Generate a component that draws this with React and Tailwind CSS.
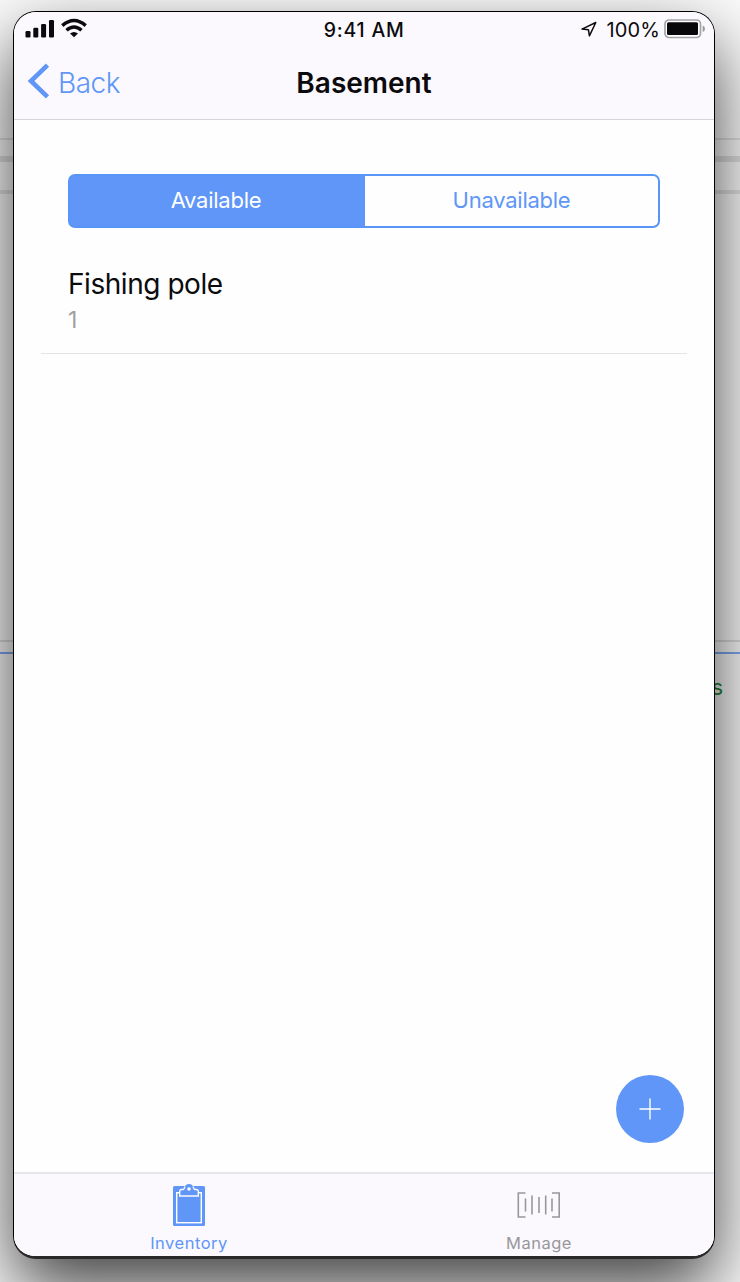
import React from 'react';

function DesktopBackdrop() {
  return (
    <div className="flex h-[1282px] w-[740px] flex-col bg-[#fbfbfb]">
      <div className="mt-[138px] h-[2px] bg-[#e2e2e2]" />
      <div className="mt-4 h-[6px] bg-[#e0e0e0]" />
      <div className="mt-[28px] h-[4px] bg-[#e2e2e2]" />
      <div className="mt-[446px] h-[2px] bg-[#dcdcdc]" />
      <div className="mt-[10px] h-[2px] bg-[#7fa9f5]" />
      <div className="mt-[20px] pr-[17px] text-right text-[22px] leading-[26px] text-[#2b8a3c]">items</div>
    </div>
  );
}

function StatusBar() {
  return (
    <div className="flex h-[35px] items-center justify-between pl-[11px] pr-[8px]">
      <svg className="-mt-px block" width="64" height="22" viewBox="0 0 64 22" fill="#0b0b0d">
        <rect x="0.5" y="13" width="5" height="6.5" rx="1.2" />
        <rect x="8.3" y="9.7" width="5" height="9.8" rx="1.2" />
        <rect x="16.1" y="6" width="5" height="13.5" rx="1.2" />
        <rect x="24" y="2" width="5" height="17.5" rx="1.2" />
        <g fill="none" stroke="#0b0b0d" strokeWidth="3.5">
          <path d="M37.300 7.600Q49 -2.500 60.700 7.600" />
          <path d="M41.500 12.300Q49 5.800 56.500 12.300" />
        </g>
        <path d="M45 15.600Q49 12.200 53 15.600L49 19.300Z" />
      </svg>
      <div className="ml-[59px] text-[19.5px] font-medium leading-6 tracking-[0.8px]">9:41 AM</div>
      <div className="flex items-center">
        <svg className="mr-[8px] block" width="18" height="17" viewBox="0 0 18 17" fill="none" stroke="#0b0b0d" strokeWidth="1.5" strokeLinejoin="round">
          <path d="M15.800 1.500L9.400 14.800L8.400 8.700L2 8.100Z" />
        </svg>
        <span className="text-[20px] leading-6 tracking-[0.15px]">100%</span>
        <svg className="-mt-px ml-[4px] block" width="42" height="20" viewBox="0 0 42 20">
          <rect x="1" y="1" width="35.500" height="17.500" rx="4" fill="#fff" stroke="#a4a3a8" strokeWidth="1.700" />
          <rect x="3" y="3.300" width="31" height="12.700" rx="1.500" fill="#08080a" />
          <path d="M38.700 6.500Q41 7.300 41 9.800T38.700 13Z" fill="#98979c" />
        </svg>
      </div>
    </div>
  );
}

function NavBar() {
  return (
    <div className="grid h-[71px] grid-cols-3 items-center">
      <div className="flex items-center pl-[13px] text-[#6096f8]">
        <svg className="-mt-[4px] block" width="23" height="36" viewBox="0 0 23 36" fill="none" stroke="currentColor" strokeWidth="4.600">
          <path d="M20.500 2.200L4 18L20.500 33.800" />
        </svg>
        <span className="ml-[8px] text-[28px] font-light leading-8 tracking-[-0.5px]">Back</span>
      </div>
      <h1 className="text-center text-[28px] font-semibold leading-8">Basement</h1>
    </div>
  );
}

function ClipboardIcon() {
  return (
    <svg className="block" width="34" height="42" viewBox="0 0 34 42">
      <rect x="1" y="2" width="32" height="40" rx="1.500" fill="#6096f8" />
      <rect x="4.700" y="8.700" width="24.600" height="30" fill="none" stroke="#fff" strokeWidth="1.400" />
      <path d="M7.700 12V7.500Q7.700 5.500 9.700 5.500H11.300C12.500 5.500 12.300 0.700 17 0.700S21.500 5.500 22.700 5.500H24.300Q26.300 5.500 26.300 7.500V12Z" fill="#6096f8" stroke="#faf9fd" strokeWidth="1.400" />
      <path d="M12.800 3.200Q13.800 0 17 0T21.200 3.200Z" fill="#6096f8" />
      <circle cx="17" cy="5" r="1.800" fill="#fff" />
    </svg>
  );
}

function BarcodeIcon() {
  return (
    <svg className="block" width="44" height="28" viewBox="0 0 44 28" fill="none" stroke="#98979b" strokeWidth="1.600">
      <path d="M8.500 2H1.300V26H8.500M35 2H42.200V26H35M8.500 7.500V20.500M15 4.500V23.500M22 6V22M28.700 4.500V23.500M35 7.500V20.500" />
    </svg>
  );
}

export default function App() {
  return (
    <div className="relative h-[1282px] w-[740px] overflow-hidden font-['Inter',sans-serif] text-[#0b0b0d]">
      <DesktopBackdrop />
      <main className="absolute left-[13px] top-[11px] flex h-[1248px] w-[702px] flex-col overflow-hidden rounded-[23px] border border-b-[3px] border-black border-b-[#29292b] bg-[#fefefe] shadow-[0_30px_70px_rgba(0,0,0,0.74)]">
        <header className="h-[108px] shrink-0 border-b border-[#d5d4d8] bg-[#fbf9fd]">
          <StatusBar />
          <NavBar />
        </header>
        <section className="grow px-[27px] pt-[54px]">
          <div className="mx-[27px] grid h-[54px] w-[592px] grid-cols-[295px_1fr] overflow-hidden rounded-[7px] border-2 border-[#5995f8] bg-[#6096f8] text-[22px] font-normal leading-[48px] tracking-[-0.25px]">
            <button className="bg-[#6096f8] pb-[2px] pr-[3px] text-white">Available</button>
            <button className="bg-[#fefefe] pb-[2px] text-[#6096f8]">Unavailable</button>
          </div>
          <div className="flex h-[126px] w-[646px] flex-col border-b border-[#e4e4e5] px-[27px] pt-[38px]">
            <span className="text-[28px] leading-9 tracking-[-0.45px]">Fishing pole</span>
            <span className="mt-[2px] text-[23px] leading-8 text-[#a0a0a0]">1</span>
          </div>
        </section>
        <button className="mb-[29px] mr-[30px] flex size-[68px] shrink-0 items-center justify-center self-end rounded-full bg-[#6096f8]">
          <svg className="block" width="22" height="22" viewBox="0 0 22 22" stroke="#fff" strokeWidth="1.400">
            <path d="M11 0.500V21.500M0.500 11H21.500" />
          </svg>
        </button>
        <nav className="grid h-[84px] shrink-0 grid-cols-2 border-t-2 border-[#e6e5e9] bg-[#fbf9fd] text-[16.5px] leading-5 tracking-[0.5px]">
          <div className="flex flex-col items-center pt-[10px] text-[#6096f8]">
            <ClipboardIcon />
            <span className="mt-[7px]">Inventory</span>
          </div>
          <div className="flex flex-col items-center pt-[17px] text-[#98979b]">
            <BarcodeIcon />
            <span className="mt-[14px]">Manage</span>
          </div>
        </nav>
      </main>
    </div>
  );
}
